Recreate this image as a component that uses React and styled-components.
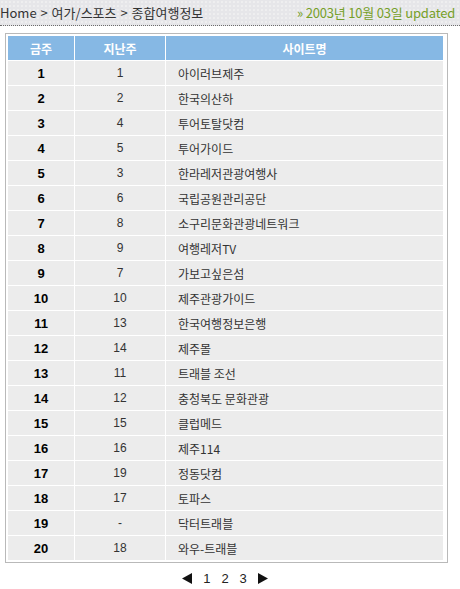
import React from 'react';
import styled, { createGlobalStyle } from 'styled-components';

const GlobalStyle = createGlobalStyle`
  body {
    margin: 0;
    background: #fff;
    font-family: "Noto Sans CJK KR", "Liberation Sans", sans-serif;
  }
`;

const Page = styled.div`
  width: 460px;
`;

const TopBar = styled.div`
  display: flex;
  justify-content: space-between;
  align-items: center;
  height: 25px;
  padding: 0 5px 0 0;
  background-color: #e6e6e9;
  background-image: radial-gradient(#f6f6f6 0.6px, transparent 0.8px);
  background-size: 4px 4px;
  border-bottom: 1px dotted #6c6c6c;
  font-size: 13px;
`;

const Crumbs = styled.div`
  color: #333;
  line-height: 25px;
  word-spacing: 1px;
`;

const Updated = styled.div`
  color: #76a02a;
  line-height: 25px;
  letter-spacing: -0.2px;
`;

const Frame = styled.div`
  margin: 7px 0 0 5px;
  width: 439px;
  border: 1px solid #b9b9b9;
  padding: 1px;
`;

const Table = styled.table`
  border-collapse: separate;
  border-spacing: 1px;
  font-size: 12px;
`;

const Head = styled.th`
  width: ${p => p.$w}px;
  height: 24px;
  padding: 0;
  background: #86b8e4;
  color: #fff;
  font-weight: bold;
  text-align: center;
`;

const Cell = styled.td`
  height: 24px;
  padding: ${p => (p.$left ? '0 0 0 12px' : '0')};
  background: #ececec;
  text-align: ${p => (p.$left ? 'left' : 'center')};
  color: ${p => (p.$bold ? '#000' : '#333')};
  font-weight: ${p => (p.$bold ? 'bold' : 'normal')};
  font-size: ${p => (p.$bold ? '13px' : '12px')};
  font-family: ${p => (p.$left ? '"Noto Sans CJK KR", sans-serif' : '"Liberation Sans", sans-serif')};
`;

const Pager = styled.div`
  display: flex;
  justify-content: center;
  align-items: center;
  gap: 11px;
  margin: 8px 0 0 -10px;
  font-family: "Liberation Sans", sans-serif;
  font-size: 13px;
  color: #222;
`;

const rows = [
  [1, '1', '아이러브제주'],
  [2, '2', '한국의산하'],
  [3, '4', '투어토탈닷컴'],
  [4, '5', '투어가이드'],
  [5, '3', '한라레저관광여행사'],
  [6, '6', '국립공원관리공단'],
  [7, '8', '소구리문화관광네트워크'],
  [8, '9', '여행레저TV'],
  [9, '7', '가보고싶은섬'],
  [10, '10', '제주관광가이드'],
  [11, '13', '한국여행정보은행'],
  [12, '14', '제주몰'],
  [13, '11', '트래블 조선'],
  [14, '12', '충청북도 문화관광'],
  [15, '15', '클럽메드'],
  [16, '16', '제주114'],
  [17, '19', '정동닷컴'],
  [18, '17', '토파스'],
  [19, '-', '닥터트래블'],
  [20, '18', '와우-트래블'],
];

const Arrow = ({ dir }) => (
  <svg width="10" height="11" viewBox="0 0 10 11">
    {dir === 'left'
      ? <polygon points="10,0 10,11 0,5.5" fill="#111" />
      : <polygon points="0,0 0,11 10,5.5" fill="#111" />}
  </svg>
);

export default function App() {
  return (
    <Page>
      <GlobalStyle />
      <TopBar>
        <Crumbs>Home &gt; 여가/스포츠 &gt; 종합여행정보</Crumbs>
        <Updated>» 2003년 10월 03일 updated</Updated>
      </TopBar>
      <Frame>
        <Table>
          <thead>
            <tr>
              <Head $w={66}>금주</Head>
              <Head $w={90}>지난주</Head>
              <Head $w={277}>사이트명</Head>
            </tr>
          </thead>
          <tbody>
            {rows.map(([now, last, name]) => (
              <tr key={now}>
                <Cell $bold>{now}</Cell>
                <Cell>{last}</Cell>
                <Cell $left>{name}</Cell>
              </tr>
            ))}
          </tbody>
        </Table>
      </Frame>
      <Pager>
        <Arrow dir="left" />
        <span>1</span>
        <span>2</span>
        <span>3</span>
        <Arrow dir="right" />
      </Pager>
    </Page>
  );
}
